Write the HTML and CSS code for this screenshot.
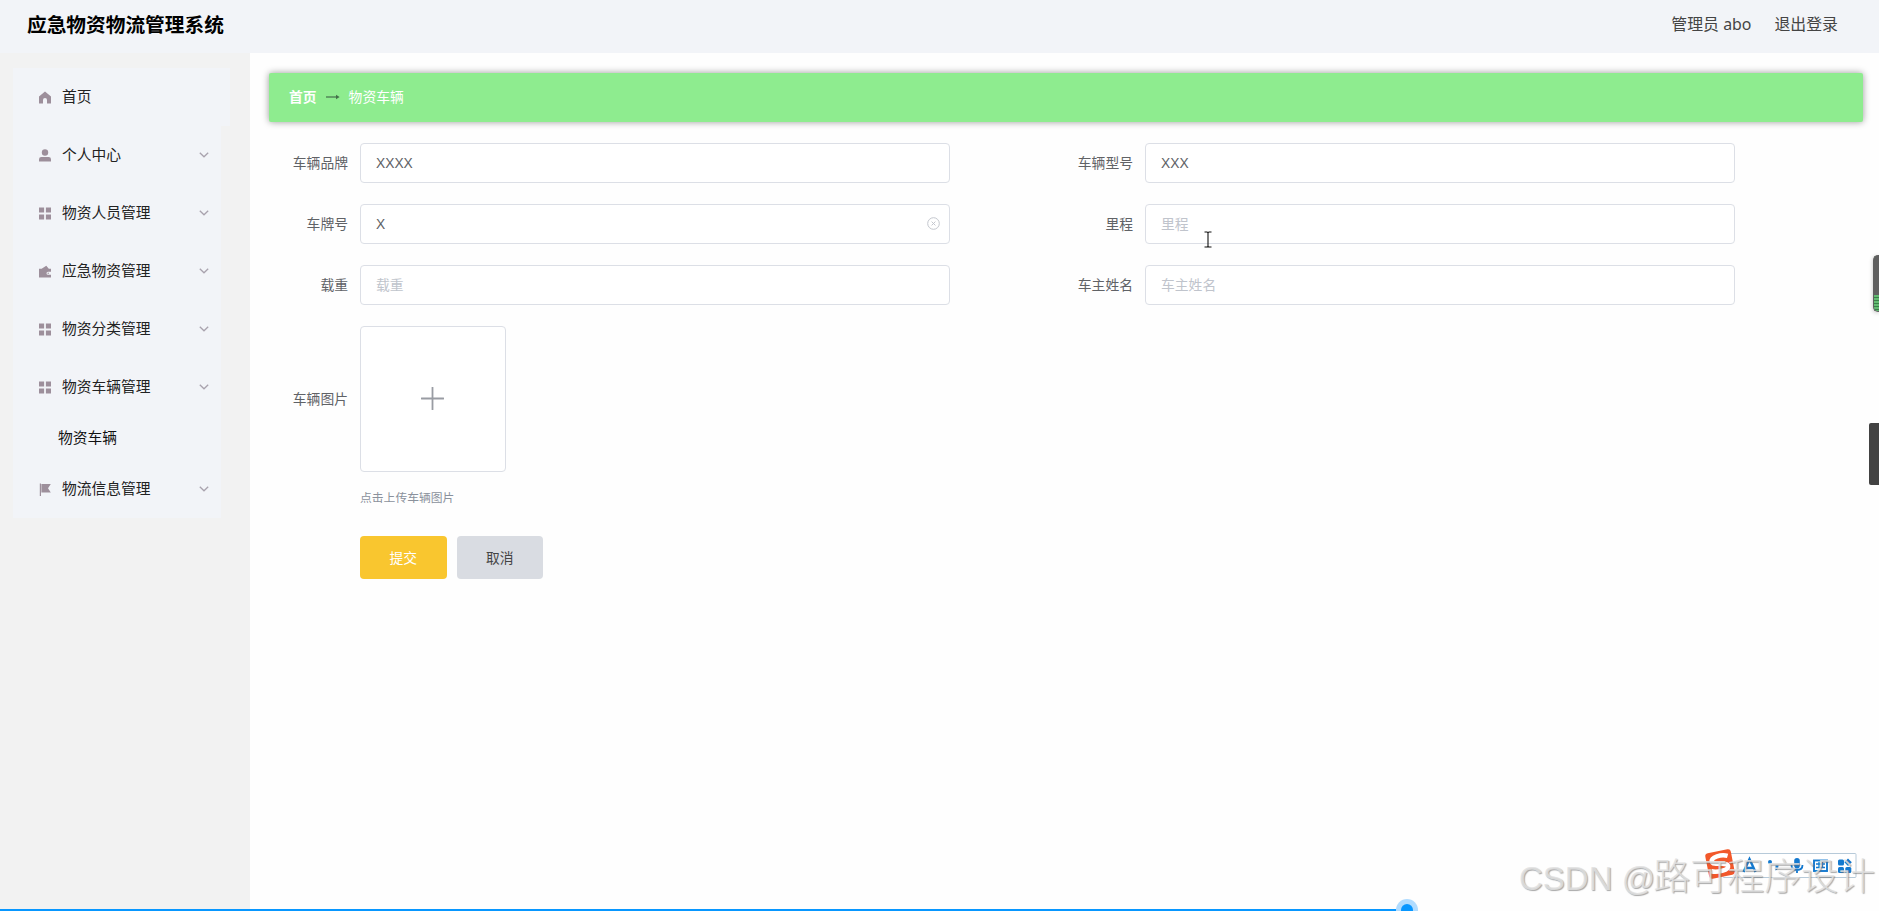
FILE: index.html
```
<!DOCTYPE html>
<html lang="zh-CN">
<head>
  <meta charset="UTF-8" />
  <meta name="viewport" content="width=device-width, initial-scale=1" />
  <title>应急物资物流管理系统</title>
  <link rel="stylesheet" href="styles.css">
</head>
<body>

  <!-- shared icons -->
  <svg class="sprite" width="0" height="0">
    <symbol id="arrow-down" viewBox="0 0 10 6"><path d="M.8.8 5 4.8 9.2.8" fill="none" stroke="#a9a3ae" stroke-width="1.3"/></symbol>
    <symbol id="menu" viewBox="0 0 12 12"><path d="M0 0h5.1v5.1H0zM6.9 0H12v5.1H6.9zM0 6.9h5.1V12H0zM6.9 6.9H12V12H6.9z"/></symbol>
    <symbol id="home" viewBox="0 0 12 12"><path d="M6 0 12 5v7H8V8.500a2 2 0 0 0-4 0V12H0V5z"/></symbol>
    <symbol id="user" viewBox="0 0 12 12"><circle cx="6" cy="3" r="3.2"/><path d="M0 12V9.8q0-2.4 2.4-2.4h7.2q2.4 0 2.4 2.4V12z"/></symbol>
    <symbol id="wallet" viewBox="0 0 12 12"><path d="M0 3.3h2.6L7.3.2 9.8 3.3H12v2.9H9a1.5 1.5 0 0 0 0 3h3V12H0z"/><circle cx="9.2" cy="7.7" r=".7"/></symbol>
    <symbol id="flag" viewBox="0 0 12 12"><path d="M.8 0H2v12.500H.8zM2.400.5H11.800L9 4.800l2.800 4.200H2.400z"/></symbol>
  </svg>

  <header>
    <h1>应急物资物流管理系统</h1>
    <div class="user-info">
      <span>管理员 abo</span>
      <a>退出登录</a>
    </div>
  </header>

  <div class="container">
    <aside>
      <ul class="menu">
        <li class="menu-item home"><svg class="icon"><use href="#home"/></svg><span>首页</span></li>
        <li class="menu-item"><svg class="icon"><use href="#user"/></svg><span>个人中心</span><svg class="arrow"><use href="#arrow-down"/></svg></li>
        <li class="menu-item"><svg class="icon"><use href="#menu"/></svg><span>物资人员管理</span><svg class="arrow"><use href="#arrow-down"/></svg></li>
        <li class="menu-item"><svg class="icon"><use href="#wallet"/></svg><span>应急物资管理</span><svg class="arrow"><use href="#arrow-down"/></svg></li>
        <li class="menu-item"><svg class="icon"><use href="#menu"/></svg><span>物资分类管理</span><svg class="arrow"><use href="#arrow-down"/></svg></li>
        <li class="menu-item"><svg class="icon"><use href="#menu"/></svg><span>物资车辆管理</span><svg class="arrow"><use href="#arrow-down"/></svg></li>
        <li class="sub-item">物资车辆</li>
        <li class="menu-item"><svg class="icon"><use href="#flag"/></svg><span>物流信息管理</span><svg class="arrow"><use href="#arrow-down"/></svg></li>
      </ul>
    </aside>

    <main>
      <div class="breadcrumb">
        <b>首页</b>
        <svg width="14" height="6" viewBox="0 0 14 6"><path d="M0 3h12" stroke="#44704a" stroke-width="1.2"/><path d="M10 .8 13.6 3 10 5.2z" fill="#44704a"/></svg>
        <span>物资车辆</span>
      </div>

      <form>
        <div class="form-item">
          <label>车辆品牌</label>
          <div class="input">XXXX</div>
        </div>
        <div class="form-item">
          <label>车辆型号</label>
          <div class="input">XXX</div>
        </div>
        <div class="form-item">
          <label>车牌号</label>
          <div class="input">X
            <svg class="clear" width="13" height="13" viewBox="0 0 13 13" fill="none" stroke="#c3c6cd"><circle cx="6.5" cy="6.5" r="5.8"/><path d="m4.6 4.6 3.8 3.8m0-3.8L4.6 8.4"/></svg>
          </div>
        </div>
        <div class="form-item">
          <label>里程</label>
          <div class="input placeholder">里程
            <svg class="cursor" width="8" height="17" viewBox="0 0 8 17"><path d="M.5 1H3q1 0 1 1 0-1 1-1h2.5M4 1.5v14M.5 16H3q1 0 1-1 0 1 1 1h2.5" fill="none" stroke="#111" stroke-width="1.1"/></svg>
          </div>
        </div>
        <div class="form-item">
          <label>载重</label>
          <div class="input placeholder">载重</div>
        </div>
        <div class="form-item">
          <label>车主姓名</label>
          <div class="input placeholder">车主姓名</div>
        </div>
        <div class="form-item upload-item">
          <label>车辆图片</label>
          <div class="upload">
            <svg width="23" height="23" viewBox="0 0 23 23"><path d="M11.5.5v22M.5 11.5h22" stroke="#999ca3" stroke-width="1.8" stroke-linecap="round"/></svg>
          </div>
        </div>
      </form>
      <p class="tip">点击上传车辆图片</p>
      <div class="buttons">
        <button type="button" class="submit">提交</button>
        <button type="button" class="cancel">取消</button>
      </div>
    </main>
  </div>

  <!-- floating things at the window edges -->
  <div class="meter"></div>
  <div class="side-tab"></div>

  <div class="ime">
    <svg width="155" height="34" viewBox="0 0 155 34">
      <rect x="20" y="5.5" width="133" height="24" rx="1" fill="#fff" stroke="#b7cad9"/>
      <g transform="rotate(-11 17 16)">
        <rect x="4" y="3" width="26" height="26" rx="3" fill="#f2582a"/>
        <path d="M26 9.500C20 6.500 9.500 7.500 9.500 12c0 5 15 2.500 15 7.500 0 4.500-12 4.500-17.500 2" fill="none" stroke="#fff" stroke-width="4.600"/>
      </g>
      <g fill="none" stroke="#1479cf" stroke-width="2.400">
        <path d="M40.500 24 46.500 11l6 13M42.500 20h8"/>
        <path d="M88.500 17q0 5 5.500 5t5.500-5M94 22v3" stroke-width="1.800"/>
        <rect x="111" y="12.500" width="13" height="10.500" stroke-width="1.900"/>
        <path d="M113 16h9M113 19.500h9M116 14v6M119.500 14v6" stroke-width="1.300"/>
      </g>
      <g fill="#1479cf">
        <circle cx="67" cy="14" r="2"/><path d="M72.500 17.500h3q0 4-3 5z"/>
        <rect x="91.200" y="10" width="5.600" height="10.500" rx="2.800"/>
        <rect x="135" y="11.500" width="6" height="6" rx="1.500"/><path d="m145 10.500 3.800 3.800-3.800 3.800-3.600-3.800z"/>
        <rect x="135" y="19" width="6" height="6" rx="1.500"/><rect x="142.300" y="19" width="6" height="6" rx="1.500"/>
      </g>
    </svg>
  </div>
  <div class="watermark"><span>CSDN @</span>路可程序设计</div>

  <div class="progress"><i></i></div>

</body>
</html>
```
FILE: styles.css
```
* {
  box-sizing: border-box;
}

body {
  margin: 0;
  height: 911px;
  overflow: hidden;
  position: relative;
  display: flex;
  flex-direction: column;
  background: #fefefe;
  color: #606266;
  font-family: "Noto Sans", "Noto Sans CJK SC", sans-serif;
  font-size: 13.8px;
}

.sprite {
  position: absolute;
}

header {
  height: 53px;
  flex: none;
  display: flex;
  justify-content: space-between;
  align-items: center;
  padding: 0 41px 5px 27px;
  background: #f2f4f8;
}

header h1 {
  margin: 0;
  font-family: "Noto Sans CJK SC", sans-serif;
  font-size: 19.7px;
  line-height: 30px;
  color: #000;
}

.user-info {
  display: flex;
  gap: 23px;
  font-size: 15.9px;
  line-height: 24px;
  color: #444;
}

.container {
  flex: 1;
  display: flex;
}

aside {
  width: 250px;
  flex: none;
  padding: 15px 0 0 13px;
  background: #f2f2f2;
}

.menu {
  width: 208px;
  margin: 0;
  padding: 0;
  list-style: none;
  background: #f2f4f8;
  color: #222;
  font-size: 14.75px;
}

.menu-item {
  height: 58px;
  display: flex;
  align-items: center;
  padding: 0 12px 0 26px;
}

.menu-item span {
  padding-bottom: 3px;
}

.menu-item.home {
  width: 217px;
  background: #f2f4f8;
}

.menu-item .icon {
  width: 12px;
  height: 13px;
  margin: 1px 11px 0 0;
  fill: #9d8f9b;
}

.menu-item .arrow {
  width: 10px;
  height: 6px;
  margin-left: auto;
}

.sub-item {
  height: 44px;
  line-height: 43px;
  padding-left: 45px;
  color: #111;
}

main {
  flex: 1;
  padding: 20px 16px 0 19px;
}

.breadcrumb {
  height: 49px;
  display: flex;
  align-items: center;
  gap: 9px;
  padding-left: 20px;
  background: #8eec8f;
  border-radius: 2px;
  box-shadow: 0 0 7px rgba(0, 0, 0, 0.4);
  color: #fff;
}

.breadcrumb b,
.breadcrumb span {
  padding-bottom: 3px;
}

.breadcrumb svg {
  margin-bottom: 2px;
}

form {
  display: grid;
  grid-template-columns: 681px 681px;
  column-gap: 104px;
  row-gap: 21px;
  margin-top: 21px;
}

.form-item {
  display: flex;
  align-items: center;
}

.form-item label {
  width: 91px;
  padding: 0 12px 2px 0;
  text-align: right;
}

.input {
  position: relative;
  width: 590px;
  height: 40px;
  line-height: 40px;
  padding-left: 15px;
  border: 1px solid #dcdfe6;
  border-radius: 4px;
  background: #fff;
  font-family: "Liberation Sans", "Noto Sans CJK SC", sans-serif;
}

.input.placeholder {
  color: #c0c4cc;
}

.clear {
  position: absolute;
  right: 9px;
  top: 12px;
}

.cursor {
  position: absolute;
  left: 58px;
  top: 26px;
}

.upload {
  width: 146px;
  height: 146px;
  display: flex;
  align-items: center;
  justify-content: center;
  border: 1px solid #dcdfe6;
  border-radius: 4px;
  background: #fff;
}

.upload svg {
  margin: 0 1px 1px 0;
}

.tip {
  margin: 16px 0 0 91px;
  font-size: 11.8px;
  line-height: 18px;
  color: #8a919c;
}

.buttons {
  display: flex;
  gap: 10px;
  margin: 30px 0 0 91px;
}

button {
  width: 86.5px;
  height: 43px;
  padding: 0 0 2px;
  border: none;
  border-radius: 4px;
  font-family: inherit;
  font-size: 13.8px;
}

.submit {
  background: #f9c62f;
  color: #fff;
}

.cancel {
  background: #d9dce2;
  color: #444;
}

.meter {
  position: absolute;
  right: 0;
  top: 255px;
  width: 6px;
  height: 57px;
  border: 1px solid #5f5f5f;
  border-right: none;
  border-radius: 5px 0 0 5px;
  background: linear-gradient(#5f5f5f 39px, transparent 39px), repeating-linear-gradient(#63bb72 0 2px, #397f48 2px 3px);
  box-shadow: 0 1px 4px rgba(0, 0, 0, 0.25);
}

.side-tab {
  position: absolute;
  right: 0;
  top: 423px;
  width: 10px;
  height: 62px;
  border-radius: 2px 0 0 2px;
  background: #424242;
}

.ime {
  position: absolute;
  left: 1703px;
  top: 848px;
}

.watermark {
  position: absolute;
  left: 1519px;
  top: 849px;
  line-height: 50px;
  white-space: nowrap;
  font-family: "Noto Sans CJK SC", sans-serif;
  font-size: 37px;
  font-weight: 300;
  color: rgba(225, 225, 225, 0.85);
  text-shadow: 1px 1px 1px rgba(110, 110, 110, 0.6);
}

.watermark span {
  margin-right: -2px;
  font-family: "Liberation Sans", sans-serif;
  font-size: 33px;
}

.progress {
  position: absolute;
  left: 0;
  bottom: 0;
  width: 1407px;
  height: 2px;
  background: #0897ff;
}

.progress i {
  position: absolute;
  right: -6px;
  top: -5px;
  width: 12px;
  height: 12px;
  border-radius: 50%;
  background: #0897ff;
  box-shadow: 0 0 0 5px #b0dcff;
}
```
